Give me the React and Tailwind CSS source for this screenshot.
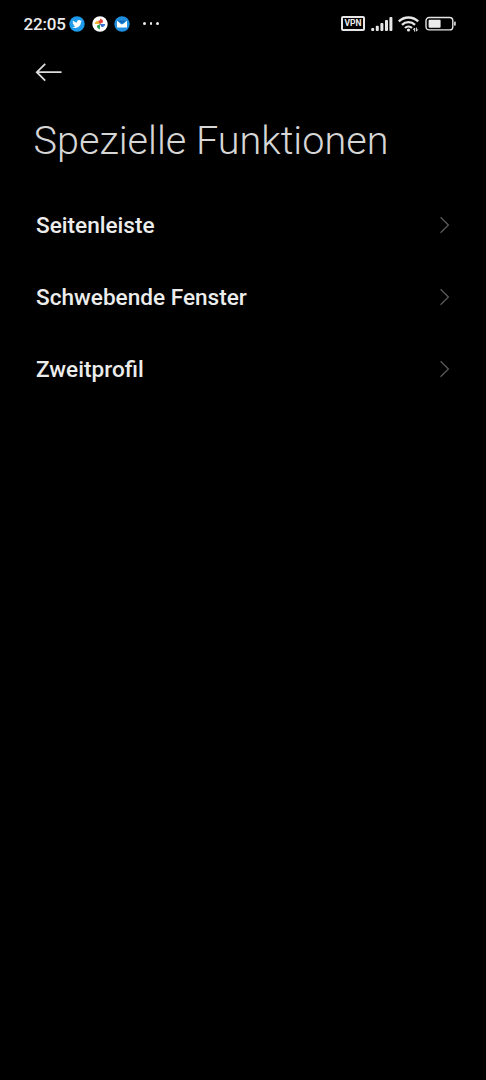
import React from 'react';

const items = ['Seitenleiste', 'Schwebende Fenster', 'Zweitprofil'];

function TwitterBadge() {
  return (
    <svg className="w-4 h-4" viewBox="0 0 16 16">
      <circle cx="8" cy="8" r="7.7" fill="#1d9bea" />
      <g transform="translate(3.3 3.2) scale(0.4)">
        <path
          fill="#fff"
          d="M23.95 4.57a10 10 0 01-2.82.77 4.96 4.96 0 002.16-2.72c-.95.55-2 .96-3.13 1.18a4.92 4.92 0 00-8.38 4.48A13.98 13.98 0 011.64 3.16a4.92 4.92 0 001.52 6.57 4.9 4.9 0 01-2.23-.61v.06a4.92 4.92 0 003.95 4.83 5 5 0 01-2.21.08 4.94 4.94 0 004.6 3.42A9.87 9.87 0 010 19.54a13.99 13.99 0 007.55 2.21c9.05 0 14-7.5 14-13.98 0-.21 0-.42-.02-.63a9.94 9.94 0 002.42-2.57z"
        />
      </g>
    </svg>
  );
}

function PhotosBadge() {
  return (
    <svg className="w-4 h-4" viewBox="0 0 16 16">
      <circle cx="8" cy="8" r="7.7" fill="#fff" />
      <path d="M8 8V2.8c2 .2 3.2 1.4 3 3.4z" fill="#e2453c" />
      <path d="M8 8H2.8c.2-2 1.4-3.2 3.4-3z" fill="#f3b62c" />
      <path d="M8 8v5.2c-2-.2-3.2-1.4-3-3.4z" fill="#2b9f50" />
      <path d="M8 8h5.2c-.2 2-1.4 3.2-3.4 3z" fill="#3b78dd" />
      <path d="M8 8L6.2 5 8 4.2z" fill="#c9372f" />
      <path d="M8 8L11 9.8l-1.2 1.2z" fill="#2b5fc0" />
    </svg>
  );
}

function MailBadge() {
  return (
    <svg className="w-4 h-4" viewBox="0 0 16 16">
      <circle cx="8" cy="8" r="7.7" fill="#1f8fe0" />
      <path d="M3 4.8l3.6 3c.8.7 2 .7 2.8 0l3.6-3v6.6H3z" fill="#fff" />
      <path d="M4 4.4h8L8.8 7c-.5.4-1.1.4-1.6 0z" fill="#1566b4" />
    </svg>
  );
}

function StatusBar() {
  return (
    <div className="h-[47px] pl-[23px] pr-[29px] flex items-center justify-between text-[#ececec]">
      <div className="flex items-center">
        <span className="w-[46px] pl-[0.5px] pt-px text-[17px] leading-none font-medium tracking-[-0.2px] whitespace-nowrap">
          22:05
        </span>
        <div className="flex items-center gap-[6.5px]">
          <TwitterBadge />
          <PhotosBadge />
          <MailBadge />
        </div>
        <div className="ml-[13px] flex gap-[3.8px]">
          <span className="w-[2.8px] h-[2.8px] rounded-full bg-[#ececec]" />
          <span className="w-[2.8px] h-[2.8px] rounded-full bg-[#ececec]" />
          <span className="w-[2.8px] h-[2.8px] rounded-full bg-[#ececec]" />
        </div>
      </div>

      <div className="flex items-center">
        <span className="w-6 h-[15px] border-2 border-[#e6e6e6] rounded-[2px] flex items-center justify-center text-[8.5px] leading-none font-bold">
          VPN
        </span>
        <svg className="w-[22px] h-4 ml-[6px]" viewBox="0 0 22 16" fill="#e6e6e6">
          <rect x="0.2" y="12" width="3" height="3" rx="0.9" />
          <rect x="4.8" y="9.8" width="3" height="5.2" rx="0.9" />
          <rect x="9.4" y="7" width="3" height="8" rx="0.9" />
          <rect x="14" y="4" width="3" height="11" rx="0.9" />
          <rect x="18.4" y="1" width="3" height="14" rx="0.9" />
        </svg>
        <svg className="w-[22px] h-4 ml-[5px]" viewBox="0 0 22 16" fill="none" stroke="#e6e6e6" strokeWidth="2.3">
          <path d="M0.8 5.4a14 14 0 0 1 19.4 0" />
          <path d="M4 8.9a9.2 9.2 0 0 1 13 0" />
          <path d="M7 12a5 5 0 0 1 7 0" />
          <circle cx="10.5" cy="14" r="1.6" fill="#e6e6e6" stroke="none" />
          <path d="M16.6 15.6v-3.6l-1.4 1.8M18.4 11.6v3.6l1.4-1.8" strokeWidth="1" />
        </svg>
        <svg className="w-8 h-4 ml-[5px]" viewBox="0 0 32 16">
          <rect x="1" y="1.5" width="26.8" height="12.4" rx="3.2" fill="none" stroke="#e6e6e6" strokeWidth="1.4" />
          <rect x="3.6" y="3.8" width="12" height="8" rx="1" fill="#ececec" />
          <rect x="29" y="5.6" width="1.8" height="4.2" rx="0.8" fill="#cfcfcf" />
        </svg>
      </div>
    </div>
  );
}

export default function App() {
  return (
    <div className="h-[1080px] bg-black font-[Roboto,sans-serif] antialiased select-none">
      <StatusBar />

      <div className="h-[50px] pl-[35px] flex items-center">
        <svg className="w-7 h-5" viewBox="0 0 28 20" fill="none" stroke="#dcdcdc" strokeWidth="1.8">
          <path d="M26.6 10.2H2M10.2 1.8l-8.4 8.4 8.4 8.4" />
        </svg>
      </div>

      <h1 className="h-[92px] pl-[33.5px] pt-5 text-[39.6px] leading-[47px] font-light text-[#d6d6d6] whitespace-nowrap">
        Spezielle Funktionen
      </h1>

      <ul>
        {items.map((item) => (
          <li key={item} className="h-[72px] pl-9 pr-9 flex items-center justify-between">
            <span className="pt-[2px] text-[22.6px] leading-none font-medium text-[#ececec]">{item}</span>
            <svg className="w-[11px] h-[18px]" viewBox="0 0 11 18" fill="none" stroke="#5a5a5a" strokeWidth="1.3">
              <path d="M1.6 1.2L9.4 9l-7.8 7.8" />
            </svg>
          </li>
        ))}
      </ul>
    </div>
  );
}
